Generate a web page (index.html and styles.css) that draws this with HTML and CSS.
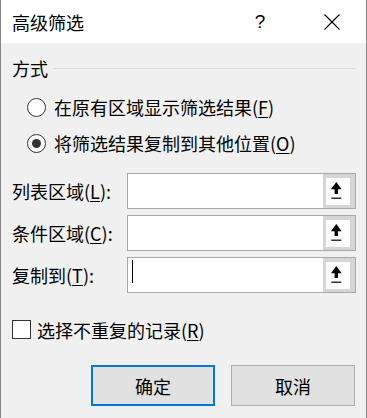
FILE: index.html
```html
<!DOCTYPE html>
<html lang="zh-CN">
<head>
<meta charset="utf-8">
<title>高级筛选</title>
<link rel="stylesheet" href="styles.css">
</head>
<body>
<div class="window">
  <div class="titlebar">
    <div class="title">高级筛选</div>
    <div class="caption-btn help">?</div>
    <div class="caption-btn close">
      <svg width="16" height="16" viewBox="0 0 16 16"><path d="M0.5 0.5 L15.5 15.5 M15.5 0.5 L0.5 15.5" stroke="#000" stroke-width="1.1" fill="none"/></svg>
    </div>
  </div>
  <div class="content">
    <div class="group-header">
      <span class="group-title">方式</span>
      <span class="group-line"></span>
    </div>
    <div class="radios">
      <div class="radio-row">
        <span class="radio"></span>
        <span class="label">在原有区域显示筛选结果(<u>F</u>)</span>
      </div>
      <div class="radio-row">
        <span class="radio checked"><span class="dot"></span></span>
        <span class="label">将筛选结果复制到其他位置(<u>O</u>)</span>
      </div>
    </div>
    <div class="fields">
      <div class="field-row">
        <span class="field-label">列表区域(<u>L</u>):</span>
        <div class="field-box">
          <div class="field-input"></div>
          <div class="ref-btn"><div class="ref-inner">
            <svg width="24" height="27" viewBox="0 0 24 27"><polygon points="10.3,4 15.6,11.3 12,11.3 12,16 8.6,16 8.6,11.3 5,11.3" fill="#000"/><rect x="5.3" y="19.6" width="10" height="1.2" fill="#000"/></svg>
          </div></div>
        </div>
      </div>
      <div class="field-row">
        <span class="field-label">条件区域(<u>C</u>):</span>
        <div class="field-box">
          <div class="field-input"></div>
          <div class="ref-btn"><div class="ref-inner">
            <svg width="24" height="27" viewBox="0 0 24 27"><polygon points="10.3,4 15.6,11.3 12,11.3 12,16 8.6,16 8.6,11.3 5,11.3" fill="#000"/><rect x="5.3" y="19.6" width="10" height="1.2" fill="#000"/></svg>
          </div></div>
        </div>
      </div>
      <div class="field-row">
        <span class="field-label">复制到(<u>T</u>):</span>
        <div class="field-box">
          <div class="field-input"><span class="caret"></span></div>
          <div class="ref-btn"><div class="ref-inner">
            <svg width="24" height="27" viewBox="0 0 24 27"><polygon points="10.3,4 15.6,11.3 12,11.3 12,16 8.6,16 8.6,11.3 5,11.3" fill="#000"/><rect x="5.3" y="19.6" width="10" height="1.2" fill="#000"/></svg>
          </div></div>
        </div>
      </div>
    </div>
    <div class="check-row">
      <span class="checkbox"></span>
      <span class="label">选择不重复的记录(<u>R</u>)</span>
    </div>
    <div class="buttons">
      <div class="btn default">确定</div>
      <div class="btn">取消</div>
    </div>
  </div>
</div>
</body>
</html>
```
FILE: styles.css
```css
html, body {
  margin: 0;
  padding: 0;
}
body {
  width: 367px;
  height: 418px;
  overflow: hidden;
  font-family: "Noto Sans CJK SC", "Noto Sans", sans-serif;
  font-size: 18px;
  color: #000;
  background: #f0f0f0;
}
.window {
  box-sizing: border-box;
  width: 367px;
  height: 418px;
  border-left: 1px solid #858585;
  border-right: 1px solid #858585;
  background: #f0f0f0;
  display: flex;
  flex-direction: column;
}
.titlebar {
  height: 43px;
  background: #fff;
  display: flex;
  align-items: center;
  padding-left: 11px;
}
.title {
  flex: 1;
  line-height: 18px;
  font-size: 18px;
}
.caption-btn {
  width: 70px;
  height: 43px;
  display: flex;
  align-items: center;
  justify-content: center;
}
.help {
  font-family: "Liberation Sans", sans-serif;
  font-size: 19px;
  line-height: 19px;
  padding-right: 4px;
  box-sizing: border-box;
}
.close {
  width: 69px;
}
.content {
  flex: 1;
  padding: 16px 10px 0 11px;
}
.group-header {
  height: 18px;
  display: flex;
  align-items: center;
}
.group-title {
  line-height: 18px;
}
.group-line {
  flex: 1;
  height: 1px;
  background: #dcdcdc;
  margin-left: 5px;
}
.radios {
  margin-top: 12px;
  padding-left: 15px;
}
.radio-row {
  height: 36px;
  display: flex;
  align-items: center;
}
.radio {
  box-sizing: border-box;
  width: 19px;
  height: 19px;
  border: 1px solid #333;
  border-radius: 50%;
  background: #fff;
  display: flex;
  align-items: center;
  justify-content: center;
  margin-right: 8px;
}
.dot {
  width: 9px;
  height: 9px;
  border-radius: 50%;
  background: #333;
}
.label {
  line-height: 18px;
  white-space: nowrap;
}
u {
  text-decoration-thickness: 1px;
  text-underline-offset: 2px;
}
.fields {
  margin-top: 12px;
  display: flex;
  flex-direction: column;
  gap: 6px;
}
.field-row {
  height: 36px;
  display: flex;
  align-items: center;
}
.field-label {
  width: 115px;
  line-height: 18px;
  white-space: nowrap;
}
.field-box {
  box-sizing: border-box;
  width: 230px;
  height: 36px;
  border: 1px solid #a8a8a8;
  background: #fff;
  display: flex;
}
.field-input {
  flex: 1;
  padding: 2px 0 0 4px;
}
.caret {
  display: block;
  width: 1px;
  height: 23px;
  background: #000;
}
.ref-btn {
  width: 32px;
  box-sizing: border-box;
  background: #d5d5d5;
  padding: 4px 4px 3px 3px;
}
.ref-inner {
  width: 24px;
  height: 27px;
  background: #fcfcfc;
}
.ref-inner svg {
  display: block;
}
.check-row {
  margin-top: 27px;
  display: flex;
  align-items: center;
  height: 19px;
}
.checkbox {
  box-sizing: border-box;
  width: 19px;
  height: 19px;
  border: 1px solid #333;
  background: #fff;
  margin-right: 6px;
}
.buttons {
  margin-top: 26px;
  display: flex;
  justify-content: flex-end;
  gap: 16px;
  padding-right: 1px;
}
.btn {
  box-sizing: border-box;
  width: 124px;
  height: 41px;
  border: 1px solid #adadad;
  background: #e1e1e1;
  display: flex;
  align-items: center;
  justify-content: center;
  line-height: 18px;
}
.btn.default {
  border: 2px solid #0078d7;
}
```
